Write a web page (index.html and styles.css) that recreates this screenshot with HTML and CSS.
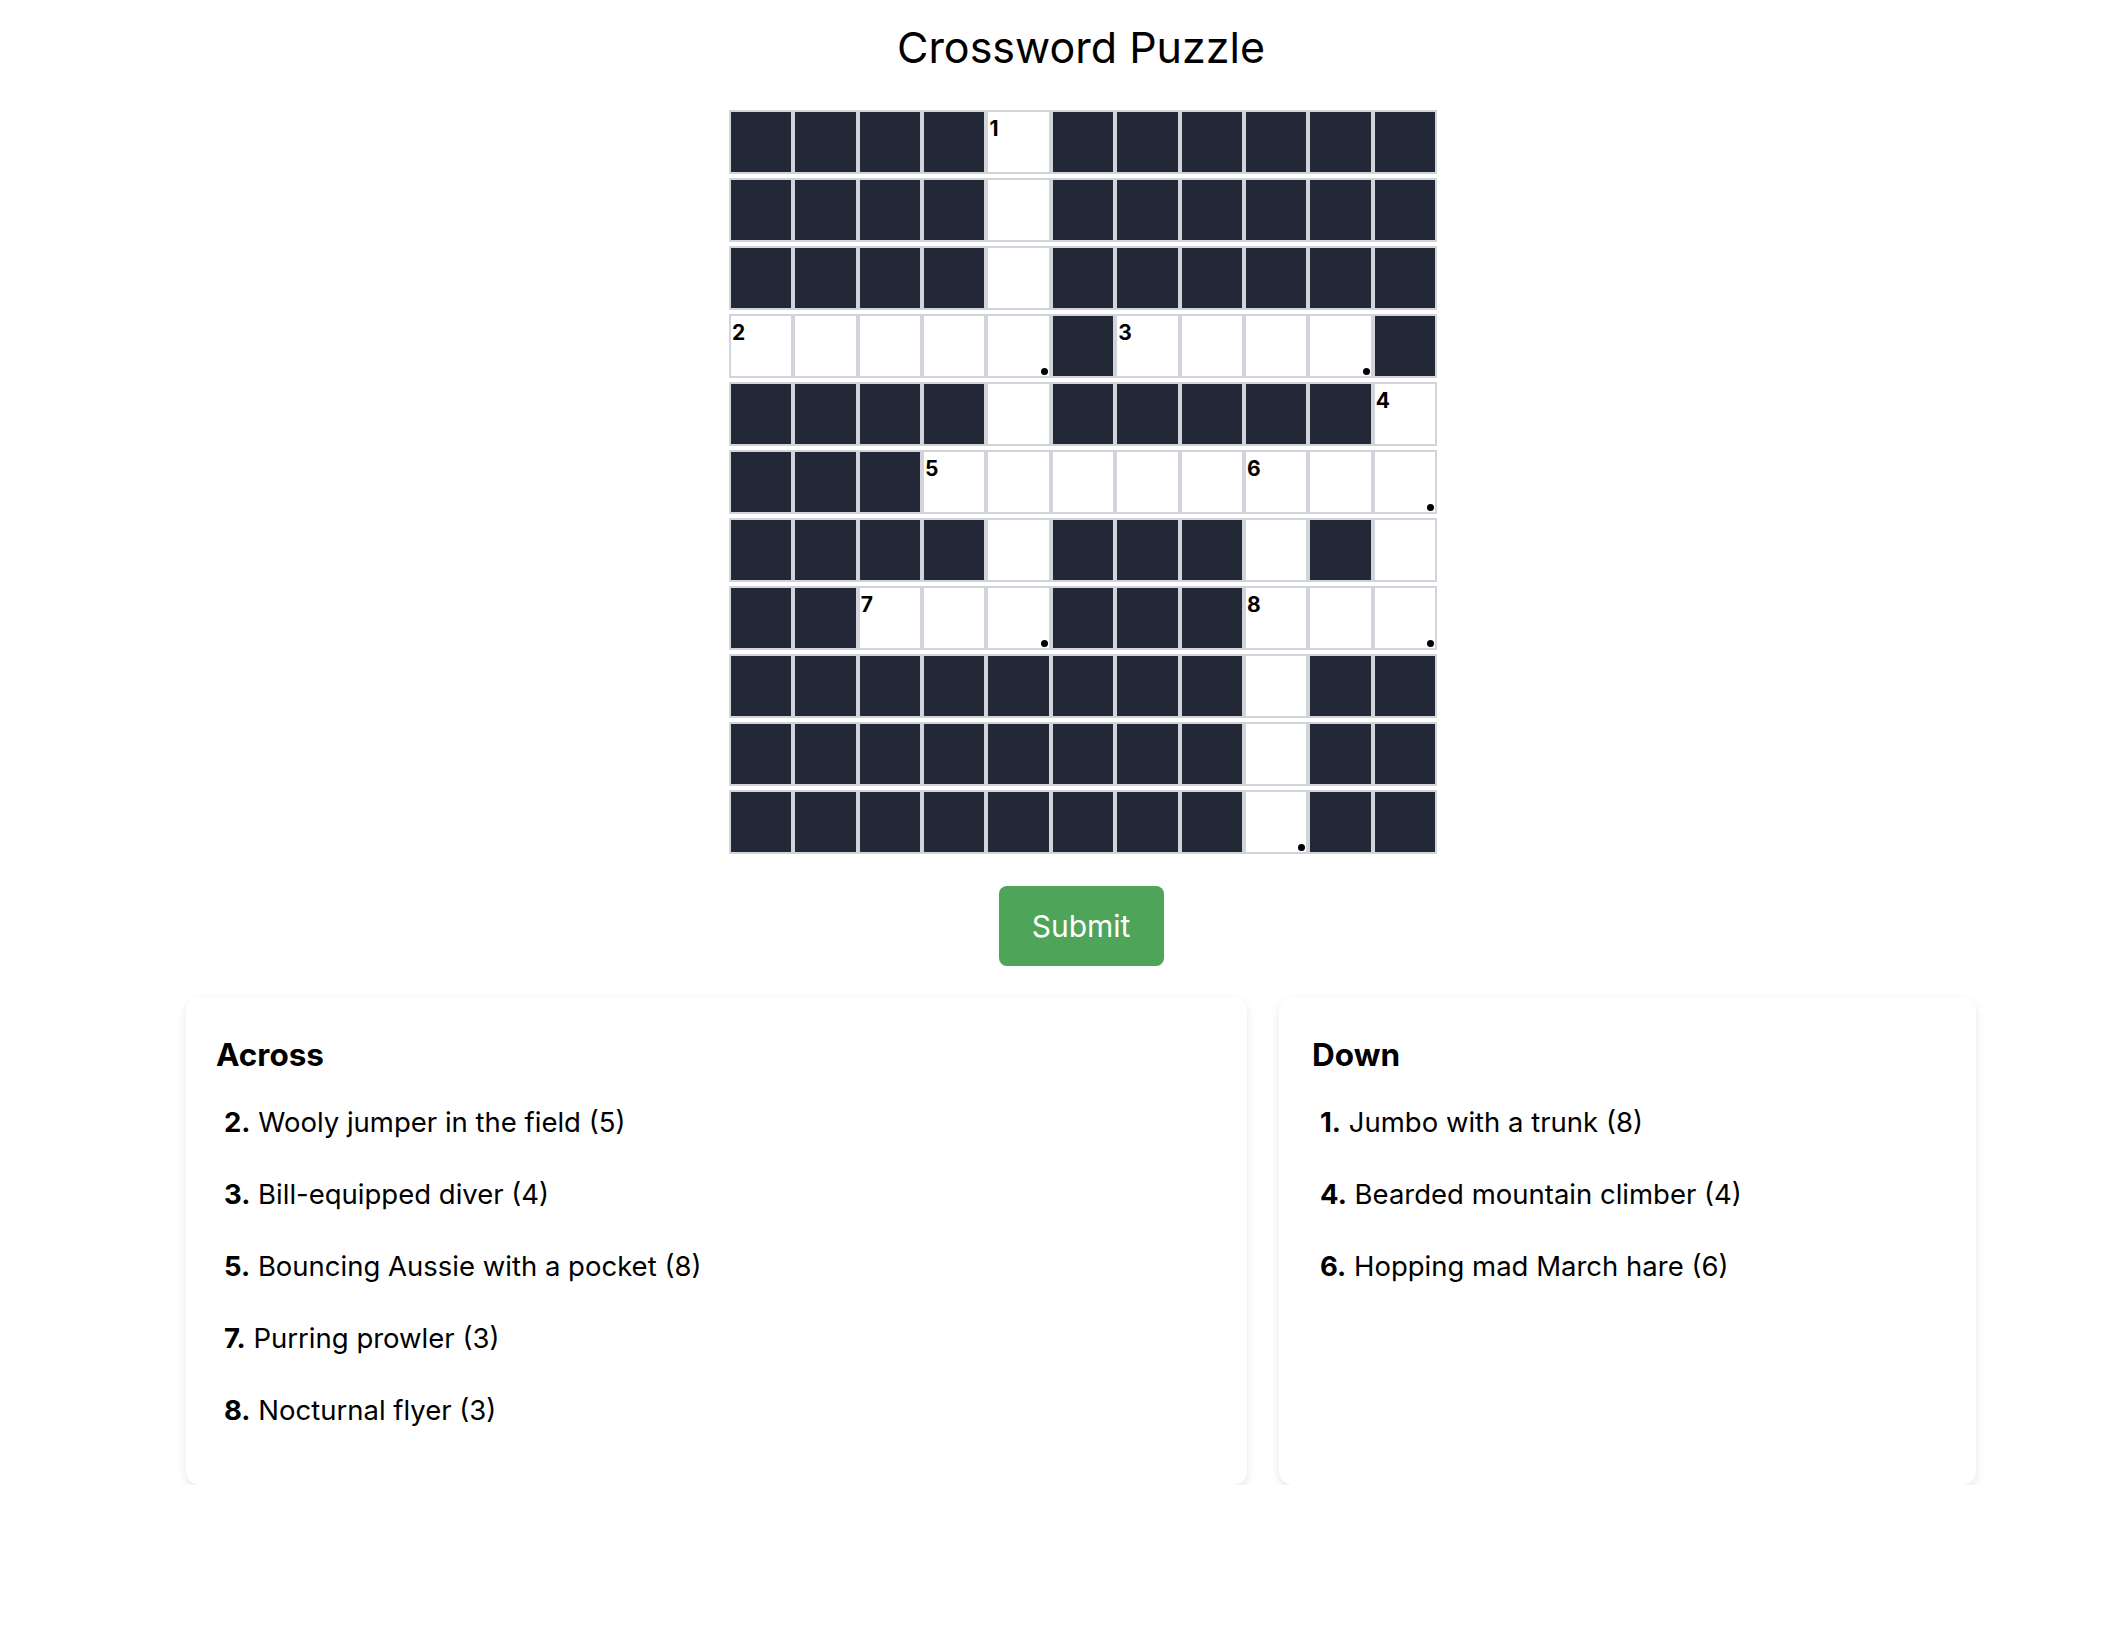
FILE: index.html
```html
<!DOCTYPE html>
<html lang="en">
<head>
<meta charset="utf-8">
<title>Crossword Puzzle</title>
<link rel="stylesheet" href="styles.css">
</head>
<body>
<div class="page">
  <h1 class="title">Crossword Puzzle</h1>
  <div class="grid-wrap">
    <div class="grid">
      <div class="cell b"></div><div class="cell b"></div><div class="cell b"></div><div class="cell b"></div><div class="cell w"><span class="num">1</span></div><div class="cell b"></div><div class="cell b"></div><div class="cell b"></div><div class="cell b"></div><div class="cell b"></div><div class="cell b"></div>
      <div class="cell b"></div><div class="cell b"></div><div class="cell b"></div><div class="cell b"></div><div class="cell w"></div><div class="cell b"></div><div class="cell b"></div><div class="cell b"></div><div class="cell b"></div><div class="cell b"></div><div class="cell b"></div>
      <div class="cell b"></div><div class="cell b"></div><div class="cell b"></div><div class="cell b"></div><div class="cell w"></div><div class="cell b"></div><div class="cell b"></div><div class="cell b"></div><div class="cell b"></div><div class="cell b"></div><div class="cell b"></div>
      <div class="cell w"><span class="num">2</span></div><div class="cell w"></div><div class="cell w"></div><div class="cell w"></div><div class="cell w"><span class="dot"></span></div><div class="cell b"></div><div class="cell w"><span class="num">3</span></div><div class="cell w"></div><div class="cell w"></div><div class="cell w"><span class="dot"></span></div><div class="cell b"></div>
      <div class="cell b"></div><div class="cell b"></div><div class="cell b"></div><div class="cell b"></div><div class="cell w"></div><div class="cell b"></div><div class="cell b"></div><div class="cell b"></div><div class="cell b"></div><div class="cell b"></div><div class="cell w"><span class="num">4</span></div>
      <div class="cell b"></div><div class="cell b"></div><div class="cell b"></div><div class="cell w"><span class="num">5</span></div><div class="cell w"></div><div class="cell w"></div><div class="cell w"></div><div class="cell w"></div><div class="cell w"><span class="num">6</span></div><div class="cell w"></div><div class="cell w"><span class="dot"></span></div>
      <div class="cell b"></div><div class="cell b"></div><div class="cell b"></div><div class="cell b"></div><div class="cell w"></div><div class="cell b"></div><div class="cell b"></div><div class="cell b"></div><div class="cell w"></div><div class="cell b"></div><div class="cell w"></div>
      <div class="cell b"></div><div class="cell b"></div><div class="cell w"><span class="num">7</span></div><div class="cell w"></div><div class="cell w"><span class="dot"></span></div><div class="cell b"></div><div class="cell b"></div><div class="cell b"></div><div class="cell w"><span class="num">8</span></div><div class="cell w"></div><div class="cell w"><span class="dot"></span></div>
      <div class="cell b"></div><div class="cell b"></div><div class="cell b"></div><div class="cell b"></div><div class="cell b"></div><div class="cell b"></div><div class="cell b"></div><div class="cell b"></div><div class="cell w"></div><div class="cell b"></div><div class="cell b"></div>
      <div class="cell b"></div><div class="cell b"></div><div class="cell b"></div><div class="cell b"></div><div class="cell b"></div><div class="cell b"></div><div class="cell b"></div><div class="cell b"></div><div class="cell w"></div><div class="cell b"></div><div class="cell b"></div>
      <div class="cell b"></div><div class="cell b"></div><div class="cell b"></div><div class="cell b"></div><div class="cell b"></div><div class="cell b"></div><div class="cell b"></div><div class="cell b"></div><div class="cell w"><span class="dot"></span></div><div class="cell b"></div><div class="cell b"></div>
    </div>
  </div>
  <button class="submit" type="button">Submit</button>
  <div class="clues">
    <section class="card">
      <h2 class="card-title">Across</h2>
      <ul class="clue-list">
        <li><b>2.</b> Wooly jumper in the field (5)</li>
        <li><b>3.</b> Bill-equipped diver (4)</li>
        <li><b>5.</b> Bouncing Aussie with a pocket (8)</li>
        <li><b>7.</b> Purring prowler (3)</li>
        <li><b>8.</b> Nocturnal flyer (3)</li>
      </ul>
    </section>
    <section class="card card-down">
      <h2 class="card-title">Down</h2>
      <ul class="clue-list">
        <li><b>1.</b> Jumbo with a trunk (8)</li>
        <li><b>4.</b> Bearded mountain climber (4)</li>
        <li><b>6.</b> Hopping mad March hare (6)</li>
      </ul>
    </section>
  </div>
</div>
</body>
</html>
```

FILE: styles.css
```css
* { box-sizing: border-box; }

body {
  margin: 0;
  background: #ffffff;
  color: #000000;
  font-family: Inter, "Noto Sans", sans-serif;
}

.page {
  width: 1790px;
  margin-left: 186px;
  padding-top: 21px;
}

.title {
  margin: 0;
  font-size: 43px;
  line-height: 52px;
  font-weight: 400;
  text-align: center;
}

.grid-wrap {
  width: 712px;
  margin: 37px auto 0;
  padding-left: 4px;
}

.grid {
  display: grid;
  grid-template-columns: repeat(11, 1fr);
  grid-auto-rows: 64px;
  row-gap: 4px;
  width: 708px;
}

.cell {
  position: relative;
  border: 2px solid #d1d5db;
}

.cell.b { background: #222836; }
.cell.w { background: #ffffff; }

.num {
  position: absolute;
  top: 6px;
  left: 1px;
  font-size: 21px;
  line-height: 21px;
  font-weight: 700;
}

.dot {
  position: absolute;
  right: 1px;
  bottom: 1px;
  width: 7px;
  height: 7px;
  border-radius: 50%;
  background: #000;
}

.submit {
  display: block;
  margin: 32px auto 0;
  width: 165px;
  height: 80px;
  border: none;
  border-radius: 8px;
  background: #4ea459;
  color: #ffffff;
  font-family: Inter, "Noto Sans", sans-serif;
  font-size: 30px;
  line-height: 80px;
  padding: 0;
}

.clues {
  display: grid;
  grid-template-columns: 1061px 697px;
  column-gap: 32px;
  margin-top: 31px;
}

.card {
  background: #ffffff;
  border-radius: 14px;
  box-shadow: 0 4px 10px rgba(0, 0, 0, 0.1);
  padding: 41px 30px 39px 30px;
}

.card-down {
  padding-left: 33px;
}

.card-title {
  margin: 0;
  font-size: 31.5px;
  line-height: 34px;
  font-weight: 700;
}

.clue-list {
  list-style: none;
  margin: 14px 0 0;
  padding: 0 0 0 8px;
}

.clue-list li {
  padding: 18px 0;
  font-size: 27.5px;
  line-height: 36px;
}

.clue-list b { font-weight: 700; }
```
